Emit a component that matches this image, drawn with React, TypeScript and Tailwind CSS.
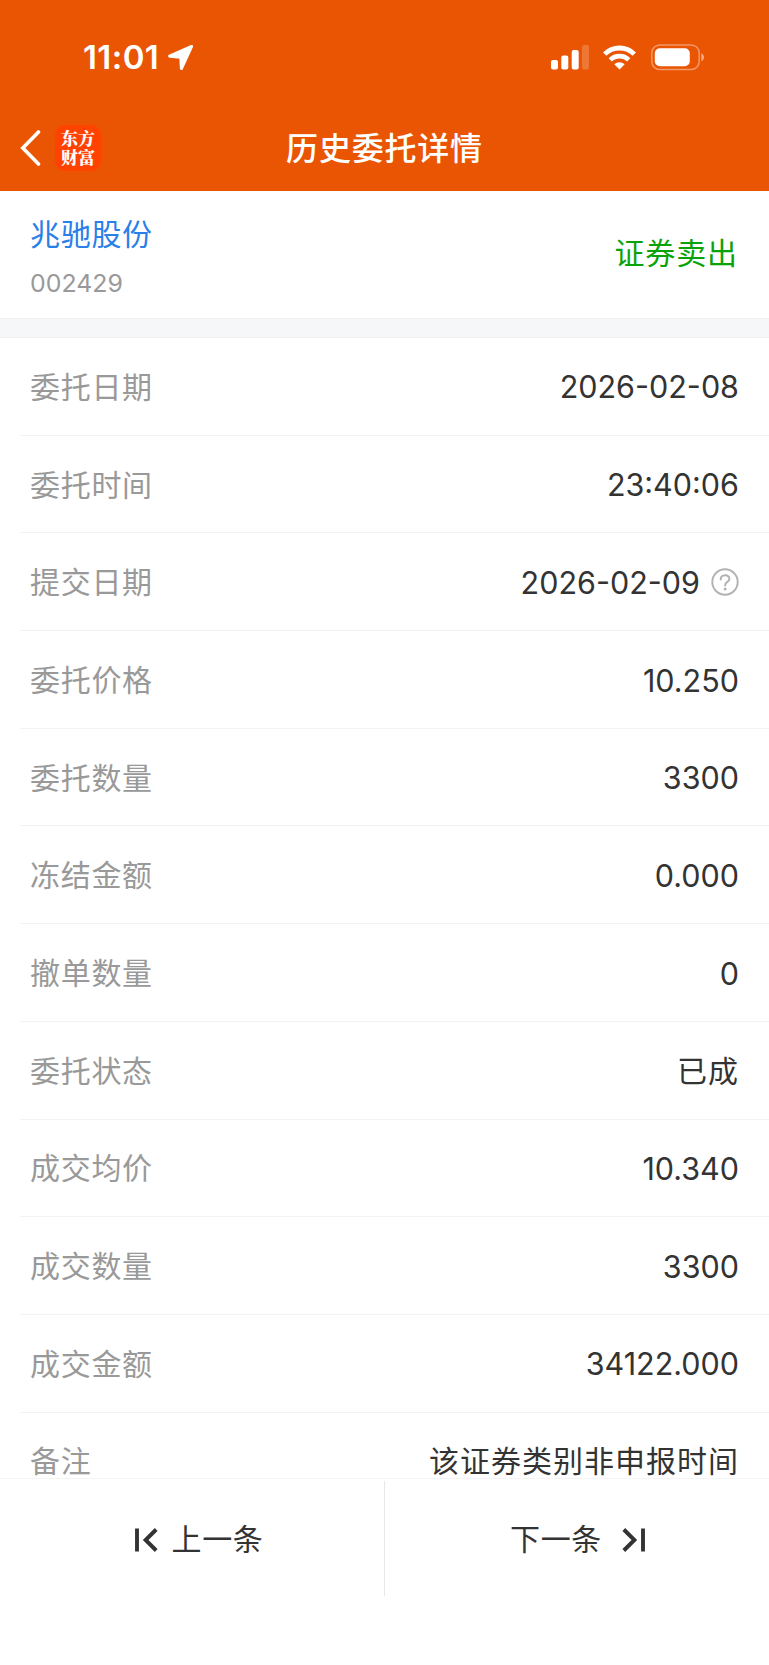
import type { ReactNode } from 'react';
import clsx from 'clsx';

type Detail = {
   label: string;
   value: string;
   hint?: boolean;
   cjk?: boolean;
};

const details: Detail[] = [
   { label: '委托日期', value: '2026-02-08' },
   { label: '委托时间', value: '23:40:06' },
   { label: '提交日期', value: '2026-02-09', hint: true },
   { label: '委托价格', value: '10.250' },
   { label: '委托数量', value: '3300' },
   { label: '冻结金额', value: '0.000' },
   { label: '撤单数量', value: '0' },
   { label: '委托状态', value: '已成', cjk: true },
   { label: '成交均价', value: '10.340' },
   { label: '成交数量', value: '3300' },
   { label: '成交金额', value: '34122.000' },
   { label: '备注', value: '该证券类别非申报时间', cjk: true },
];

const LocationIcon = () => (
   <svg width="27" height="27" viewBox="0 0 27 27" className="ml-2">
      <path
         d="M24.6 2.4 L2.6 12.2 L13.8 13.2 L14.4 24.6 Z"
         fill="#fff"
         stroke="#fff"
         strokeWidth="3"
         strokeLinejoin="round"
      />
   </svg>
);

const SignalIcon = () => (
   <svg width="38" height="25" viewBox="0 0 38 25" fill="#fff">
      <rect x="0" y="15" width="7" height="9.5" rx="2" />
      <rect x="10.3" y="10.5" width="7" height="14" rx="2" />
      <rect x="20.7" y="5" width="7" height="19.5" rx="2" />
      <rect x="31" y="0" width="7" height="24.5" rx="2" opacity="0.2" />
   </svg>
);

const WifiIcon = () => (
   <svg width="33" height="25" viewBox="0 0 33 25" fill="none" stroke="#fff">
      <path d="M1.7 9.1 A21 21 0 0 1 31.3 9.1" strokeWidth="4.8" />
      <path d="M7.3 14.9 A13 13 0 0 1 25.7 14.9" strokeWidth="4.6" />
      <path d="M16.5 24.5 L11.3 19.3 A7.4 7.4 0 0 1 21.7 19.3 Z" fill="#fff" stroke="none" />
   </svg>
);

const BatteryIcon = () => (
   <svg width="53" height="27" viewBox="0 0 53 27" fill="none">
      <rect x="0.8" y="0.9" width="47.4" height="24.6" rx="8" stroke="#fff" strokeOpacity="0.4" strokeWidth="1.5" />
      <rect x="3.8" y="4.2" width="35" height="18" rx="5" fill="#fff" />
      <path d="M50.3 9.2 C52 10 53 11.4 53 13.2 C53 15 52 16.4 50.3 17.2 Z" fill="#fff" fillOpacity="0.5" />
   </svg>
);

const HelpIcon = () => (
   <svg width="28" height="28" viewBox="0 0 28 28" fill="none" stroke="#b2b2b2">
      <circle cx="14" cy="14" r="12.7" strokeWidth="1.9" />
      <path d="M9.7 11.5 C9.7 6 18.4 6 18.4 10.9 C18.4 14 14.1 13.8 14.1 17.4" strokeWidth="2" strokeLinecap="round" />
      <circle cx="14.1" cy="21" r="1.5" fill="#b2b2b2" stroke="none" />
   </svg>
);

const FirstIcon = () => (
   <svg width="23" height="24" viewBox="0 0 23 24" fill="none" stroke="#333" strokeWidth="3.9">
      <path d="M2 0.5 V23.5" />
      <path d="M21.2 1.5 L10.6 12 L21.2 22.5" />
   </svg>
);

const Header = () => (
   <header className="h-[191px] shrink-0 bg-[#ea5504] text-white">
      <div className="flex h-[115px] items-center justify-between pr-[65px] pl-[83px]">
         <div className="flex items-center">
            <span className="text-[33px] leading-none font-semibold tracking-[0.4px]">11:01</span>
            <LocationIcon />
         </div>
         <div className="flex items-center">
            <SignalIcon />
            <span className="mr-[15px] ml-[14px]">
               <WifiIcon />
            </span>
            <BatteryIcon />
         </div>
      </div>
      <div className="flex h-[66px] items-center">
         <div className="flex w-[120px] items-center pl-5">
            <svg width="21" height="36" viewBox="0 0 21 36" fill="none" stroke="#fff" strokeWidth="3.6" strokeLinecap="round">
               <path d="M18.5 2 L2.8 18 L18.5 34" />
            </svg>
            <div className="ml-[14px] flex h-[46px] w-[46px] justify-center rounded-[10px] bg-[#ff4200] pt-[3px]">
               <span className="font-['Noto_Serif_CJK_SC','Noto_Sans_CJK_SC',sans-serif] text-[17px] leading-[19px] font-black whitespace-pre-line">
                  {'东方\n财富'}
               </span>
            </div>
         </div>
         <h1 className="flex-1 pt-px text-center text-[32px] leading-none font-medium tracking-[0.8px]">历史委托详情</h1>
         <div className="w-[120px]" />
      </div>
   </header>
);

const StockSummary = () => (
   <section className="flex h-[127px] shrink-0 items-center justify-between pr-[31px] pl-[30px]">
      <div className="flex flex-col pt-1">
         <span className="text-[30px] leading-[40px] tracking-[0.7px] text-[#2a7fe8]">兆驰股份</span>
         <span className="mt-[13px] text-[24.9px] leading-[32px] text-[#999]">002429</span>
      </div>
      <span className="pb-[3px] text-[30px] leading-[40px] tracking-[0.9px] text-[#09a309]">证券卖出</span>
   </section>
);

const DetailRow = ({ label, value, hint, cjk }: Detail) => (
   <li className="ml-5 flex h-[97.7px] shrink-0 items-center justify-between border-b border-[#f3f3f4] pr-[30px] pl-[10px]">
      <span className="pt-[2px] text-[30px] tracking-[0.7px] text-[#999]">{label}</span>
      <span className="flex items-center gap-[11px] text-[#333]">
         <span className={clsx('pt-[2px]', cjk ? 'text-[30px] tracking-[1px]' : 'text-[30.5px]')}>{value}</span>
         {hint && <HelpIcon />}
      </span>
   </li>
);

const PagerButton = ({ children }: { children: ReactNode }) => (
   <button className="flex h-[116px] flex-1 items-center justify-center pt-px text-[30px] tracking-[0.7px] text-[#333]">
      {children}
   </button>
);

const App = () => {
   return (
      <main className="flex h-[1665px] w-[769px] flex-col overflow-hidden bg-white font-[Inter,'Noto_Sans_CJK_SC',sans-serif]">
         <Header />
         <StockSummary />
         <div className="h-5 shrink-0 border-y border-[#eeeff1] bg-[#f6f7f9]" />
         <ul className="flex min-h-0 flex-1 flex-col overflow-hidden">
            {details.map((detail) => (
               <DetailRow key={detail.label} {...detail} />
            ))}
         </ul>
         <footer className="h-[187px] shrink-0 border-t border-[#f4f4f5] bg-white">
            <div className="flex pt-[2px]">
               <PagerButton>
                  <span className="ml-[15px]">
                     <FirstIcon />
                  </span>
                  <span className="ml-[13px]">上一条</span>
               </PagerButton>
               <div className="h-[115px] w-px bg-[#e8e8e8]" />
               <PagerButton>
                  <span className="mr-[20px] ml-px">下一条</span>
                  <span className="-scale-x-100">
                     <FirstIcon />
                  </span>
               </PagerButton>
            </div>
         </footer>
      </main>
   );
};

export default App;
